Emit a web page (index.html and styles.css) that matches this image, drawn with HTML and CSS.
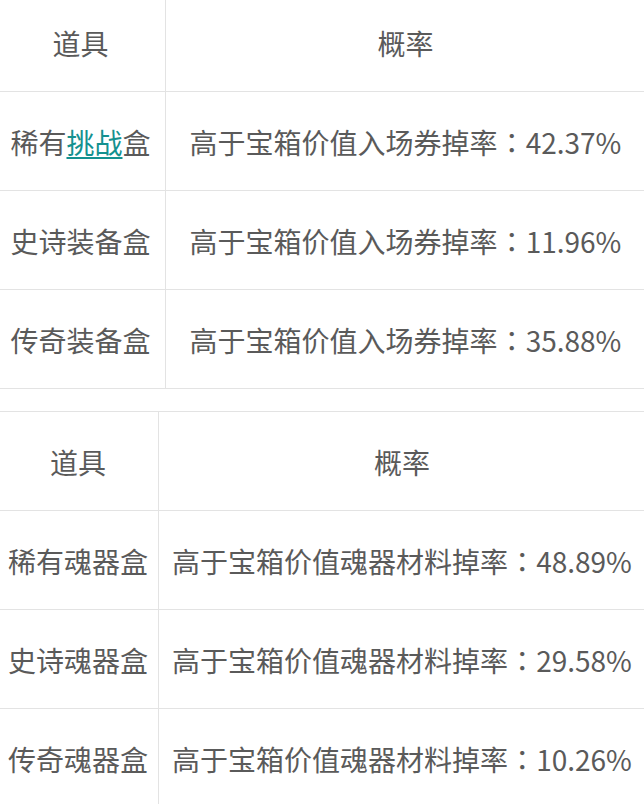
FILE: index.html
```html
<!DOCTYPE html>
<html lang="zh-CN">
<head>
<meta charset="utf-8">
<title>概率</title>
<link rel="stylesheet" href="styles.css">
</head>
<body>
<table class="prob prob-a">
  <colgroup><col class="c1"><col></colgroup>
  <tr><td class="name">道具</td><td>概率</td></tr>
  <tr><td class="name">稀有<a href="#" class="lnk">挑战</a>盒</td><td>高于宝箱价值入场券掉率<span class="colon" lang="zh-TW">：</span>42.37%</td></tr>
  <tr><td class="name">史诗装备盒</td><td>高于宝箱价值入场券掉率<span class="colon" lang="zh-TW">：</span>11.96%</td></tr>
  <tr><td class="name">传奇装备盒</td><td>高于宝箱价值入场券掉率<span class="colon" lang="zh-TW">：</span>35.88%</td></tr>
</table>
<table class="prob prob-b">
  <colgroup><col class="c1"><col></colgroup>
  <tr><td class="name">道具</td><td>概率</td></tr>
  <tr><td class="name">稀有魂器盒</td><td>高于宝箱价值魂器材料掉率<span class="colon" lang="zh-TW">：</span>48.89%</td></tr>
  <tr><td class="name">史诗魂器盒</td><td>高于宝箱价值魂器材料掉率<span class="colon" lang="zh-TW">：</span>29.58%</td></tr>
  <tr><td class="name">传奇魂器盒</td><td>高于宝箱价值魂器材料掉率<span class="colon" lang="zh-TW">：</span>10.26%</td></tr>
</table>
</body>
</html>
```
FILE: styles.css
```css
html, body {
  margin: 0;
  padding: 0;
  background: #ffffff;
  overflow: hidden;
}
body {
  font-family: "Noto Sans CJK SC", "Noto Sans", sans-serif;
  color: #5a5a5a;
  font-size: 28px;
}
.prob {
  border-collapse: collapse;
  table-layout: fixed;
  width: 647px;
  margin-left: -1px;
}
.prob td {
  border: 1px solid #e3e3e3;
  padding: 2px 0 0 0;
  height: 99px;
  text-align: center;
  vertical-align: middle;
  white-space: nowrap;
  line-height: 40px;
  box-sizing: border-box;
}
.prob-a {
  margin-top: -8px;
}
.prob-a .c1 {
  width: 166px;
}
.prob-a .name {
  padding-right: 4px;
}
.prob-b {
  margin-top: 22px;
}
.prob-b .c1 {
  width: 159px;
}
.prob-b .name {
  padding-right: 2px;
}
.colon {
  font-family: "Noto Sans CJK TC", "Noto Sans CJK JP", sans-serif;
}
.lnk {
  color: #14918f;
  text-decoration: underline;
  text-underline-offset: 3px;
}
```
